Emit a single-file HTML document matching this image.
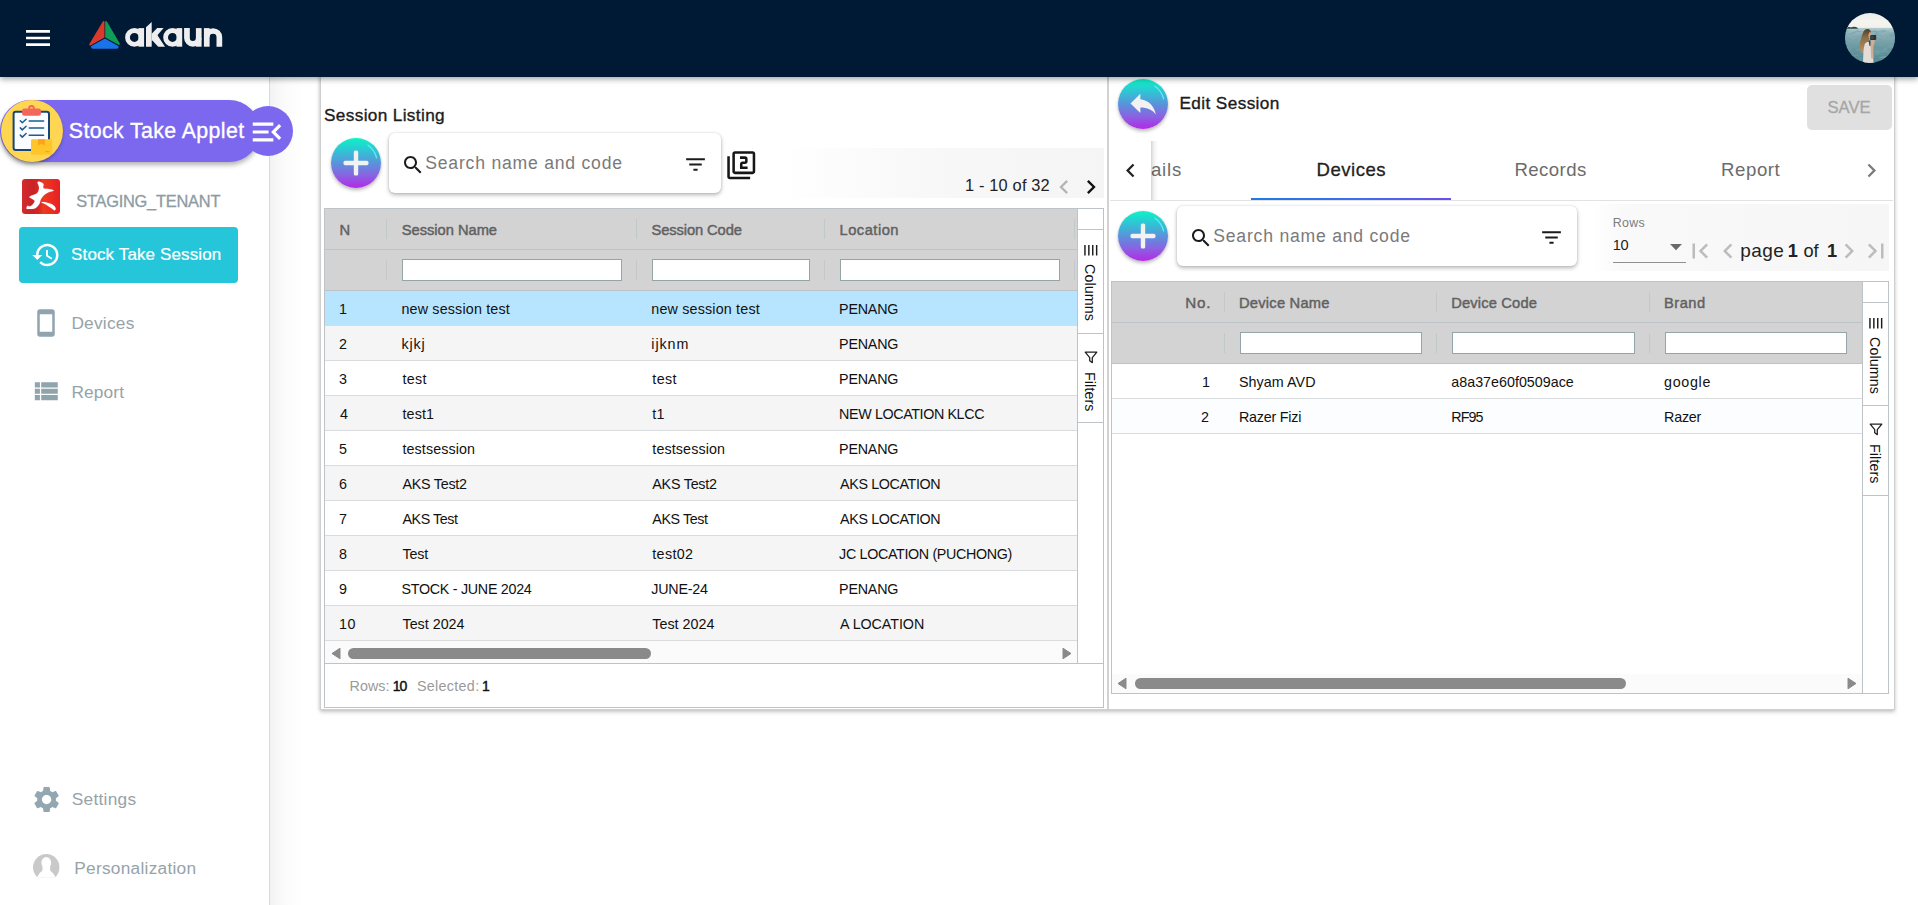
<!DOCTYPE html>
<html><head><meta charset="utf-8"><title>Stock Take Applet</title>
<style>
html,body{margin:0;padding:0;width:1918px;height:905px;overflow:hidden;background:#fff;font-family:"Liberation Sans",sans-serif}
.a{position:absolute;box-sizing:content-box}
.t{position:absolute;white-space:nowrap;line-height:1;font-family:"Liberation Sans",sans-serif}
svg{display:block;overflow:visible}
</style></head><body>
<div class="a" style="left:270px;top:77px;width:36px;height:828px;background:linear-gradient(to right,#f3f3f3,#f8f8f8 25%,#fcfcfc 50%,#fff)"></div>
<div class="a" style="left:0px;top:77px;width:269px;height:828px;background:#fff;border-right:1px solid #dadada"></div>
<div class="a" style="left:320px;top:70px;width:1573px;height:638px;background:#fff;border:1px solid #cfcfcf;box-shadow:0 2px 4px rgba(0,0,0,.22), -1px 0 3px rgba(0,0,0,.08)"></div>
<div class="a" style="left:1107px;top:77px;width:2px;height:632px;background:#d2d2d2"></div>
<span id="t_sl" class="t" style="left:324.00px;top:107.00px;font-size:17.2px;color:#1c1c1c;font-weight:normal;letter-spacing:0.357px;-webkit-text-stroke:.35px #1c1c1c">Session Listing</span>
<div class="a" style="left:780px;top:148px;width:324px;height:49.5px;background:linear-gradient(to right,#fff,#f8f8f8 45%,#f5f5f5)"></div>
<span id="t_pg1" class="t" style="left:965.00px;top:177.00px;font-size:16.4px;color:#222;font-weight:normal;letter-spacing:0.164px;">1 - 10 of 32</span>
<svg class="a" style="left:1049.5px;top:173.3px;" width="28" height="28" viewBox="0 0 24 24"><path fill="#b5b5b5" d="M15.41 7.41L14 6l-6 6 6 6 1.41-1.41L10.83 12z"/></svg>
<svg class="a" style="left:1076.6px;top:173.3px;" width="28" height="28" viewBox="0 0 24 24"><path fill="#111" d="M10 6L8.59 7.41 13.17 12l-4.58 4.59L10 18l6-6z"/></svg>
<div class="a" style="left:331px;top:138px;width:50px;height:50px;border-radius:50%;background:linear-gradient(to bottom,#0bf3c8 0%,#2fc5d4 25%,#5d8fdc 52%,#8a62e2 75%,#b22ae6 100%);box-shadow:0 2.5px 3.5px rgba(0,0,0,.24),0 0 2px rgba(0,0,0,.12)"></div>
<svg class="a" style="left:331px;top:138px" width="50" height="50" viewBox="0 0 50 50"><path d="M37 7.2 A21.5 21.5 0 0 1 45.6 19.8" fill="none" stroke="#6ff3f0" stroke-width="1.3" stroke-linecap="round" opacity=".85"/>
<rect x="12.5" y="22.8" width="25" height="4.4" rx="1.6" fill="#f2f2f2"/><rect x="22.8" y="12.5" width="4.4" height="25" rx="1.6" fill="#f2f2f2"/>
</svg>
<div class="a" style="left:389px;top:133px;width:332px;height:60px;background:#fff;border-radius:6px;box-shadow:0 2px 4px rgba(0,0,0,.28),0 0 2px rgba(0,0,0,.14)"></div>
<svg class="a" style="left:401px;top:153px;" width="24" height="24" viewBox="0 0 24 24"><path fill="#1b1b1b" d="M15.5 14h-.79l-.28-.27C15.41 12.59 16 11.11 16 9.5 16 5.91 13.09 3 9.5 3S3 5.91 3 9.5 5.91 16 9.5 16c1.61 0 3.09-.59 4.23-1.57l.27.28v.79l5 4.99L20.49 19l-4.99-5zm-6 0C7.01 14 5 11.99 5 9.5S7.01 5 9.5 5 14 7.01 14 9.5 11.99 14 9.5 14z"/></svg>
<span id="t_ph1" class="t" style="left:425.30px;top:155.00px;font-size:17.6px;color:#7a7a7a;font-weight:normal;letter-spacing:0.779px;">Search name and code</span>
<svg class="a" style="left:683.2px;top:152px;" width="25" height="25" viewBox="0 0 24 24"><path fill="#1b1b1b" d="M10 18h4v-2h-4v2zM3 6v2h18V6H3zm3 7h12v-2H6v2z"/></svg>
<svg class="a" style="left:725.6px;top:149.7px;" width="30.5" height="30.5" viewBox="0 0 24 24"><path fill="#161616" d="M3 5H1v16c0 1.1.9 2 2 2h16v-2H3V5zm18-4H7c-1.1 0-2 .9-2 2v14c0 1.1.9 2 2 2h14c1.1 0 2-.9 2-2V3c0-1.1-.9-2-2-2zm0 16H7V3h14v14zm-4-4h-4v-2h2c1.1 0 2-.89 2-2V7c0-1.11-.9-2-2-2h-4v2h4v2h-2c-1.1 0-2 .89-2 2v4h6v-2z"/></svg>
<div class="a" style="left:324px;top:208px;width:778px;height:498px;background:#fff;border:1px solid #bdc3c7"></div>
<div class="a" style="left:325px;top:209px;width:752px;height:82px;background:#d3d3d3"></div>
<div class="a" style="left:325px;top:249px;width:752px;height:1px;background:#bdc3c7"></div>
<div class="a" style="left:325px;top:290px;width:752px;height:1px;background:#bdc3c7"></div>
<div class="a" style="left:386px;top:219px;width:1px;height:20px;background:#c3c8cb"></div>
<div class="a" style="left:386px;top:260px;width:1px;height:20px;background:#c3c8cb"></div>
<div class="a" style="left:636px;top:219px;width:1px;height:20px;background:#c3c8cb"></div>
<div class="a" style="left:636px;top:260px;width:1px;height:20px;background:#c3c8cb"></div>
<div class="a" style="left:824px;top:219px;width:1px;height:20px;background:#c3c8cb"></div>
<div class="a" style="left:824px;top:260px;width:1px;height:20px;background:#c3c8cb"></div>
<div class="a" style="left:1074px;top:219px;width:1px;height:20px;background:#c3c8cb"></div>
<div class="a" style="left:1074px;top:260px;width:1px;height:20px;background:#c3c8cb"></div>
<span id="t_h_n" class="t" style="left:339.50px;top:223.00px;font-size:14.7px;color:#616161;font-weight:normal;letter-spacing:0.000px;-webkit-text-stroke:.45px #616161">N</span>
<span id="t_h_sn" class="t" style="left:401.80px;top:223.00px;font-size:14.7px;color:#616161;font-weight:normal;letter-spacing:-0.027px;-webkit-text-stroke:.45px #616161">Session Name</span>
<span id="t_h_sc" class="t" style="left:651.50px;top:223.00px;font-size:14.7px;color:#616161;font-weight:normal;letter-spacing:-0.091px;-webkit-text-stroke:.45px #616161">Session Code</span>
<span id="t_h_lo" class="t" style="left:839.50px;top:223.00px;font-size:14.7px;color:#616161;font-weight:normal;letter-spacing:0.500px;-webkit-text-stroke:.45px #616161">Location</span>
<div class="a" style="left:402px;top:259px;width:218px;height:20px;background:#fff;border:1px solid #95a5a6"></div>
<div class="a" style="left:652px;top:259px;width:156px;height:20px;background:#fff;border:1px solid #95a5a6"></div>
<div class="a" style="left:840px;top:259px;width:218px;height:20px;background:#fff;border:1px solid #95a5a6"></div>
<div class="a" style="left:325px;top:291px;width:752px;height:34px;background:#b7e4ff;border-bottom:1px solid #d9dcde"></div>
<span id="t_l0n" class="t" style="left:339.00px;top:302.00px;font-size:14.3px;color:#111;font-weight:normal;letter-spacing:0.000px;">1</span>
<span id="t_l0a" class="t" style="left:401.50px;top:302.00px;font-size:14.3px;color:#111;font-weight:normal;letter-spacing:0.167px;">new session test</span>
<span id="t_l0b" class="t" style="left:651.30px;top:302.00px;font-size:14.3px;color:#111;font-weight:normal;letter-spacing:0.180px;">new session test</span>
<span id="t_l0c" class="t" style="left:839.10px;top:302.00px;font-size:14.3px;color:#111;font-weight:normal;letter-spacing:-0.220px;">PENANG</span>
<div class="a" style="left:325px;top:326px;width:752px;height:34px;background:#f5f5f5;border-bottom:1px solid #d9dcde"></div>
<span id="t_l1n" class="t" style="left:339.00px;top:337.00px;font-size:14.3px;color:#111;font-weight:normal;letter-spacing:0.000px;">2</span>
<span id="t_l1a" class="t" style="left:401.50px;top:337.00px;font-size:14.3px;color:#111;font-weight:normal;letter-spacing:0.833px;">kjkj</span>
<span id="t_l1b" class="t" style="left:651.30px;top:337.00px;font-size:14.3px;color:#111;font-weight:normal;letter-spacing:0.925px;">ijknm</span>
<span id="t_l1c" class="t" style="left:839.10px;top:337.00px;font-size:14.3px;color:#111;font-weight:normal;letter-spacing:-0.220px;">PENANG</span>
<div class="a" style="left:325px;top:361px;width:752px;height:34px;background:#fff;border-bottom:1px solid #d9dcde"></div>
<span id="t_l2n" class="t" style="left:339.00px;top:372.00px;font-size:14.3px;color:#111;font-weight:normal;letter-spacing:0.000px;">3</span>
<span id="t_l2a" class="t" style="left:402.50px;top:372.00px;font-size:14.3px;color:#111;font-weight:normal;letter-spacing:0.333px;">test</span>
<span id="t_l2b" class="t" style="left:652.30px;top:372.00px;font-size:14.3px;color:#111;font-weight:normal;letter-spacing:0.400px;">test</span>
<span id="t_l2c" class="t" style="left:839.10px;top:372.00px;font-size:14.3px;color:#111;font-weight:normal;letter-spacing:-0.220px;">PENANG</span>
<div class="a" style="left:325px;top:396px;width:752px;height:34px;background:#f5f5f5;border-bottom:1px solid #d9dcde"></div>
<span id="t_l3n" class="t" style="left:340.00px;top:407.00px;font-size:14.3px;color:#111;font-weight:normal;letter-spacing:0.000px;">4</span>
<span id="t_l3a" class="t" style="left:402.50px;top:407.00px;font-size:14.3px;color:#111;font-weight:normal;letter-spacing:0.125px;">test1</span>
<span id="t_l3b" class="t" style="left:652.30px;top:407.00px;font-size:14.3px;color:#111;font-weight:normal;letter-spacing:0.200px;">t1</span>
<span id="t_l3c" class="t" style="left:839.10px;top:407.00px;font-size:14.3px;color:#111;font-weight:normal;letter-spacing:-0.381px;">NEW LOCATION KLCC</span>
<div class="a" style="left:325px;top:431px;width:752px;height:34px;background:#fff;border-bottom:1px solid #d9dcde"></div>
<span id="t_l4n" class="t" style="left:339.00px;top:442.00px;font-size:14.3px;color:#111;font-weight:normal;letter-spacing:0.000px;">5</span>
<span id="t_l4a" class="t" style="left:402.50px;top:442.00px;font-size:14.3px;color:#111;font-weight:normal;letter-spacing:0.100px;">testsession</span>
<span id="t_l4b" class="t" style="left:652.30px;top:442.00px;font-size:14.3px;color:#111;font-weight:normal;letter-spacing:0.120px;">testsession</span>
<span id="t_l4c" class="t" style="left:839.10px;top:442.00px;font-size:14.3px;color:#111;font-weight:normal;letter-spacing:-0.220px;">PENANG</span>
<div class="a" style="left:325px;top:466px;width:752px;height:34px;background:#f5f5f5;border-bottom:1px solid #d9dcde"></div>
<span id="t_l5n" class="t" style="left:339.00px;top:477.00px;font-size:14.3px;color:#111;font-weight:normal;letter-spacing:0.000px;">6</span>
<span id="t_l5a" class="t" style="left:402.50px;top:477.00px;font-size:14.3px;color:#111;font-weight:normal;letter-spacing:-0.250px;">AKS Test2</span>
<span id="t_l5b" class="t" style="left:652.30px;top:477.00px;font-size:14.3px;color:#111;font-weight:normal;letter-spacing:-0.225px;">AKS Test2</span>
<span id="t_l5c" class="t" style="left:840.10px;top:477.00px;font-size:14.3px;color:#111;font-weight:normal;letter-spacing:-0.373px;">AKS LOCATION</span>
<div class="a" style="left:325px;top:501px;width:752px;height:34px;background:#fff;border-bottom:1px solid #d9dcde"></div>
<span id="t_l6n" class="t" style="left:339.00px;top:512.00px;font-size:14.3px;color:#111;font-weight:normal;letter-spacing:0.000px;">7</span>
<span id="t_l6a" class="t" style="left:402.50px;top:512.00px;font-size:14.3px;color:#111;font-weight:normal;letter-spacing:-0.429px;">AKS Test</span>
<span id="t_l6b" class="t" style="left:652.30px;top:512.00px;font-size:14.3px;color:#111;font-weight:normal;letter-spacing:-0.400px;">AKS Test</span>
<span id="t_l6c" class="t" style="left:840.10px;top:512.00px;font-size:14.3px;color:#111;font-weight:normal;letter-spacing:-0.373px;">AKS LOCATION</span>
<div class="a" style="left:325px;top:536px;width:752px;height:34px;background:#f5f5f5;border-bottom:1px solid #d9dcde"></div>
<span id="t_l7n" class="t" style="left:339.00px;top:547.00px;font-size:14.3px;color:#111;font-weight:normal;letter-spacing:0.000px;">8</span>
<span id="t_l7a" class="t" style="left:402.50px;top:547.00px;font-size:14.3px;color:#111;font-weight:normal;letter-spacing:-0.167px;">Test</span>
<span id="t_l7b" class="t" style="left:652.30px;top:547.00px;font-size:14.3px;color:#111;font-weight:normal;letter-spacing:0.340px;">test02</span>
<span id="t_l7c" class="t" style="left:839.10px;top:547.00px;font-size:14.3px;color:#111;font-weight:normal;letter-spacing:-0.340px;">JC LOCATION (PUCHONG)</span>
<div class="a" style="left:325px;top:571px;width:752px;height:34px;background:#fff;border-bottom:1px solid #d9dcde"></div>
<span id="t_l8n" class="t" style="left:339.00px;top:582.00px;font-size:14.3px;color:#111;font-weight:normal;letter-spacing:0.000px;">9</span>
<span id="t_l8a" class="t" style="left:401.50px;top:582.00px;font-size:14.3px;color:#111;font-weight:normal;letter-spacing:-0.281px;">STOCK - JUNE 2024</span>
<span id="t_l8b" class="t" style="left:651.30px;top:582.00px;font-size:14.3px;color:#111;font-weight:normal;letter-spacing:-0.217px;">JUNE-24</span>
<span id="t_l8c" class="t" style="left:839.10px;top:582.00px;font-size:14.3px;color:#111;font-weight:normal;letter-spacing:-0.220px;">PENANG</span>
<div class="a" style="left:325px;top:606px;width:752px;height:34px;background:#f5f5f5;border-bottom:1px solid #d9dcde"></div>
<span id="t_l9n" class="t" style="left:339.00px;top:617.00px;font-size:14.3px;color:#111;font-weight:normal;letter-spacing:0.500px;">10</span>
<span id="t_l9a" class="t" style="left:402.50px;top:617.00px;font-size:14.3px;color:#111;font-weight:normal;letter-spacing:0.000px;">Test 2024</span>
<span id="t_l9b" class="t" style="left:652.30px;top:617.00px;font-size:14.3px;color:#111;font-weight:normal;letter-spacing:0.025px;">Test 2024</span>
<span id="t_l9c" class="t" style="left:840.10px;top:617.00px;font-size:14.3px;color:#111;font-weight:normal;letter-spacing:-0.067px;">A LOCATION</span>
<div class="a" style="left:1077px;top:209px;width:1px;height:455px;background:#bdc3c7"></div>
<div class="a" style="left:325px;top:641px;width:752px;height:22px;background:#fbfbfb"></div>
<svg class="a" style="left:330.5px;top:647px" width="10" height="13" viewBox="0 0 10 13"><path d="M9 1.2 L9 11.8 L1 6.5 Z" fill="#8a8a8a" stroke="#8a8a8a" stroke-width="1" stroke-linejoin="round"/></svg>
<svg class="a" style="left:1061.5px;top:647px" width="10" height="13" viewBox="0 0 10 13"><path d="M1 1.2 L1 11.8 L9 6.5 Z" fill="#8a8a8a" stroke="#8a8a8a" stroke-width="1" stroke-linejoin="round"/></svg>
<div class="a" style="left:348px;top:648px;width:303px;height:11px;background:#8a8a8a;border-radius:5.5px"></div>
<div class="a" style="left:325px;top:663px;width:778px;height:1px;background:#bdc3c7"></div>
<span id="t_st1" class="t" style="left:349.50px;top:679.00px;font-size:14.3px;color:#9a9a9a;font-weight:normal;letter-spacing:0.075px;">Rows:</span>
<span id="t_st2" class="t" style="left:392.80px;top:679.00px;font-size:14px;color:#111;font-weight:normal;letter-spacing:-1.200px;-webkit-text-stroke:.45px #111">10</span>
<span id="t_st3" class="t" style="left:417.00px;top:679.00px;font-size:14.3px;color:#9a9a9a;font-weight:normal;letter-spacing:0.312px;">Selected:</span>
<span id="t_st4" class="t" style="left:482.00px;top:679.00px;font-size:14px;color:#111;font-weight:normal;letter-spacing:0.000px;-webkit-text-stroke:.45px #111">1</span>
<div class="a" style="left:1077px;top:209px;width:1px;height:214px;background:#bdc3c7"></div>
<div class="a" style="left:1078px;top:229px;width:25px;height:1px;background:#bdc3c7"></div>
<div class="a" style="left:1078px;top:333px;width:25px;height:1px;background:#bdc3c7"></div>
<div class="a" style="left:1078px;top:422px;width:25px;height:1px;background:#bdc3c7"></div>
<svg class="a" style="left:1083.8px;top:244.5px" width="14" height="10.6" viewBox="0 0 14 10.6"><path d="M.95 0V10.600M4.850 0V10.600M8.750 0V10.600M12.650 0V10.600" stroke="#1c1c1c" stroke-width="1.450" fill="none"/></svg>
<span class="a" style="left:1082.3px;top:263.5px;writing-mode:vertical-rl;font-size:14.3px;line-height:16px;color:#111;letter-spacing:.1px;white-space:nowrap">Columns</span>
<svg class="a" style="left:1083.5px;top:350.5px" width="14" height="13" viewBox="0 0 14 13"><path d="M1.2 1.2 H12.8 L8.3 6.6 V11.6 L5.7 9.8 V6.6 Z" fill="none" stroke="#222" stroke-width="1.3" stroke-linejoin="round"/></svg>
<span class="a" style="left:1082.3px;top:371.5px;writing-mode:vertical-rl;font-size:14.3px;line-height:16px;color:#111;letter-spacing:.1px;white-space:nowrap">Filters</span>
<div class="a" style="left:1118px;top:79px;width:50px;height:50px;border-radius:50%;background:linear-gradient(to bottom,#0bf3c8 0%,#2fc5d4 25%,#5d8fdc 52%,#8a62e2 75%,#b22ae6 100%);box-shadow:0 2.5px 3.5px rgba(0,0,0,.24),0 0 2px rgba(0,0,0,.12)"></div>
<svg class="a" style="left:1118px;top:79px" width="50" height="50" viewBox="0 0 50 50"><path d="M37 7.2 A21.5 21.5 0 0 1 45.6 19.8" fill="none" stroke="#6ff3f0" stroke-width="1.3" stroke-linecap="round" opacity=".85"/>
<g transform="translate(8.3,8.0) scale(1.405,1.37)"><path fill="#f2f2f2" d="M10 9V5l-7 7 7 7v-4.1c5 0 8.5 1.6 11 5.1-1-5-4-10-11-11z"/></g>
</svg>
<span id="t_es" class="t" style="left:1179.50px;top:95.00px;font-size:17.2px;color:#1c1c1c;font-weight:normal;letter-spacing:0.391px;-webkit-text-stroke:.35px #1c1c1c">Edit Session</span>
<div class="a" style="left:1807px;top:85px;width:85px;height:44.5px;background:#e0e0e0;border-radius:5px"></div>
<span id="t_save" class="t" style="left:1827.50px;top:100.00px;font-size:16.6px;color:#a6a6a6;font-weight:normal;letter-spacing:0.000px;-webkit-text-stroke:.3px #a6a6a6">SAVE</span>
<div class="a" style="left:1110px;top:200px;width:783px;height:1px;background:#e2e2e2"></div>
<span id="t_tab0" class="t" style="left:1151.00px;top:161.00px;font-size:18.6px;color:#6b6b6b;font-weight:normal;letter-spacing:0.767px;">ails</span>
<span id="t_tab1" class="t" style="left:1316.50px;top:161.00px;font-size:18.6px;color:#222;font-weight:normal;letter-spacing:0.500px;-webkit-text-stroke:.3px #222">Devices</span>
<span id="t_tab2" class="t" style="left:1514.50px;top:161.00px;font-size:18.6px;color:#6b6b6b;font-weight:normal;letter-spacing:0.417px;">Records</span>
<span id="t_tab3" class="t" style="left:1721.10px;top:161.00px;font-size:18.6px;color:#6b6b6b;font-weight:normal;letter-spacing:0.560px;">Report</span>
<div class="a" style="left:1251px;top:198px;width:200px;height:2px;background:linear-gradient(to right,#1f7ae0,#3d6df0 55%,#6a4fe8)"></div>
<div class="a" style="left:1110px;top:141px;width:41px;height:59px;background:#fff"></div>
<div class="a" style="left:1151px;top:141px;width:7px;height:59px;background:linear-gradient(to right,rgba(0,0,0,.17),rgba(0,0,0,.06) 40%,rgba(0,0,0,0))"></div>
<svg class="a" style="left:1116.7px;top:156.9px;" width="27" height="27" viewBox="0 0 24 24"><path fill="#222" d="M15.41 7.41L14 6l-6 6 6 6 1.41-1.41L10.83 12z"/></svg>
<svg class="a" style="left:1858.3px;top:156.9px;" width="27" height="27" viewBox="0 0 24 24"><path fill="#7a7a7a" d="M10 6L8.59 7.41 13.17 12l-4.58 4.59L10 18l6-6z"/></svg>
<div class="a" style="left:1118px;top:211px;width:50px;height:50px;border-radius:50%;background:linear-gradient(to bottom,#0bf3c8 0%,#2fc5d4 25%,#5d8fdc 52%,#8a62e2 75%,#b22ae6 100%);box-shadow:0 2.5px 3.5px rgba(0,0,0,.24),0 0 2px rgba(0,0,0,.12)"></div>
<svg class="a" style="left:1118px;top:211px" width="50" height="50" viewBox="0 0 50 50"><path d="M37 7.2 A21.5 21.5 0 0 1 45.6 19.8" fill="none" stroke="#6ff3f0" stroke-width="1.3" stroke-linecap="round" opacity=".85"/>
<rect x="12.5" y="22.8" width="25" height="4.4" rx="1.6" fill="#f2f2f2"/><rect x="22.8" y="12.5" width="4.4" height="25" rx="1.6" fill="#f2f2f2"/>
</svg>
<div class="a" style="left:1177px;top:206px;width:400px;height:60px;background:#fff;border-radius:6px;box-shadow:0 2px 4px rgba(0,0,0,.28),0 0 2px rgba(0,0,0,.14)"></div>
<svg class="a" style="left:1189px;top:226px;" width="24" height="24" viewBox="0 0 24 24"><path fill="#1b1b1b" d="M15.5 14h-.79l-.28-.27C15.41 12.59 16 11.11 16 9.5 16 5.91 13.09 3 9.5 3S3 5.91 3 9.5 5.91 16 9.5 16c1.61 0 3.09-.59 4.23-1.57l.27.28v.79l5 4.99L20.49 19l-4.99-5zm-6 0C7.01 14 5 11.99 5 9.5S7.01 5 9.5 5 14 7.01 14 9.5 11.99 14 9.5 14z"/></svg>
<span id="t_ph2" class="t" style="left:1213.30px;top:228.00px;font-size:17.6px;color:#7a7a7a;font-weight:normal;letter-spacing:0.779px;">Search name and code</span>
<svg class="a" style="left:1539.2px;top:225px;" width="25" height="25" viewBox="0 0 24 24"><path fill="#1b1b1b" d="M10 18h4v-2h-4v2zM3 6v2h18V6H3zm3 7h12v-2H6v2z"/></svg>
<div class="a" style="left:1590px;top:204px;width:299px;height:66.5px;background:linear-gradient(to right,#fff,#f9f9f9 12%,#f6f6f6)"></div>
<span id="t_rows" class="t" style="left:1612.70px;top:217.00px;font-size:12.4px;color:#7d7d7d;font-weight:normal;letter-spacing:0.367px;">Rows</span>
<span id="t_ten" class="t" style="left:1612.70px;top:238.00px;font-size:14.6px;color:#222;font-weight:normal;letter-spacing:-0.400px;">10</span>
<svg class="a" style="left:1669.5px;top:243.6px" width="12" height="6.2" viewBox="0 0 12 6.2"><path d="M0 0H12L6 6.2Z" fill="#6a6a6a"/></svg>
<div class="a" style="left:1613px;top:262px;width:73px;height:1px;background:#8f8f8f"></div>
<svg class="a" style="left:1685.2px;top:235.7px;" width="30" height="30" viewBox="0 0 24 24"><path fill="#bcbcbc" d="M18.41 16.59L13.82 12l4.59-4.59L17 6l-6 6 6 6zM6 6h2v12H6z"/></svg>
<svg class="a" style="left:1713px;top:235.7px;" width="30" height="30" viewBox="0 0 24 24"><path fill="#bcbcbc" d="M15.41 7.41L14 6l-6 6 6 6 1.41-1.41L10.83 12z"/></svg>
<span id="t_pgp" class="t" style="left:1740.30px;top:241.00px;font-size:19px;color:#222;font-weight:normal;letter-spacing:0.400px;">page</span>
<span id="t_pg1b" class="t" style="left:1787.70px;top:242.00px;font-size:18.2px;color:#222;font-weight:bold;letter-spacing:0.000px;">1</span>
<span id="t_pgo" class="t" style="left:1803.50px;top:242.00px;font-size:18.2px;color:#222;font-weight:normal;letter-spacing:-0.200px;">of</span>
<span id="t_pg1c" class="t" style="left:1827.10px;top:242.00px;font-size:18.2px;color:#222;font-weight:bold;letter-spacing:0.000px;">1</span>
<svg class="a" style="left:1833.9px;top:235.7px;" width="30" height="30" viewBox="0 0 24 24"><path fill="#bcbcbc" d="M10 6L8.59 7.41 13.17 12l-4.58 4.59L10 18l6-6z"/></svg>
<svg class="a" style="left:1861.2px;top:235.7px;" width="30" height="30" viewBox="0 0 24 24"><path fill="#bcbcbc" d="M5.59 7.41L10.18 12l-4.59 4.59L7 18l6-6-6-6zM16 6h2v12h-2z"/></svg>
<div class="a" style="left:1111px;top:281px;width:776px;height:411px;background:#fff;border:1px solid #bdc3c7"></div>
<div class="a" style="left:1112px;top:282px;width:750px;height:82px;background:#d3d3d3"></div>
<div class="a" style="left:1112px;top:322px;width:750px;height:1px;background:#bdc3c7"></div>
<div class="a" style="left:1112px;top:363px;width:750px;height:1px;background:#bdc3c7"></div>
<div class="a" style="left:1224px;top:292px;width:1px;height:20px;background:#c3c8cb"></div>
<div class="a" style="left:1224px;top:333px;width:1px;height:20px;background:#c3c8cb"></div>
<div class="a" style="left:1436px;top:292px;width:1px;height:20px;background:#c3c8cb"></div>
<div class="a" style="left:1436px;top:333px;width:1px;height:20px;background:#c3c8cb"></div>
<div class="a" style="left:1649px;top:292px;width:1px;height:20px;background:#c3c8cb"></div>
<div class="a" style="left:1649px;top:333px;width:1px;height:20px;background:#c3c8cb"></div>
<span id="t_h_no" class="t" style="left:1185.30px;top:295.00px;font-size:15.2px;color:#616161;font-weight:normal;letter-spacing:0.750px;-webkit-text-stroke:.45px #616161">No.</span>
<span id="t_h_dn" class="t" style="left:1239.00px;top:296.00px;font-size:14.7px;color:#616161;font-weight:normal;letter-spacing:0.230px;-webkit-text-stroke:.45px #616161">Device Name</span>
<span id="t_h_dc" class="t" style="left:1451.30px;top:296.00px;font-size:14.7px;color:#616161;font-weight:normal;letter-spacing:0.150px;-webkit-text-stroke:.45px #616161">Device Code</span>
<span id="t_h_br" class="t" style="left:1664.10px;top:296.00px;font-size:14.7px;color:#616161;font-weight:normal;letter-spacing:0.475px;-webkit-text-stroke:.45px #616161">Brand</span>
<div class="a" style="left:1240px;top:332px;width:180px;height:20px;background:#fff;border:1px solid #95a5a6"></div>
<div class="a" style="left:1452px;top:332px;width:181px;height:20px;background:#fff;border:1px solid #95a5a6"></div>
<div class="a" style="left:1665px;top:332px;width:180px;height:20px;background:#fff;border:1px solid #95a5a6"></div>
<div class="a" style="left:1112px;top:364px;width:750px;height:34px;background:#fff;border-bottom:1px solid #d9dcde"></div>
<div class="a" style="left:1112px;top:399px;width:750px;height:34px;background:#fcfdfe;border-bottom:1px solid #d9dcde"></div>
<span id="t_r0n" class="t" style="left:1202.00px;top:375.00px;font-size:14.3px;color:#111;font-weight:normal;letter-spacing:0.000px;">1</span>
<span id="t_r0a" class="t" style="left:1239.00px;top:375.00px;font-size:14.3px;color:#111;font-weight:normal;letter-spacing:0.062px;">Shyam AVD</span>
<span id="t_r0b" class="t" style="left:1451.30px;top:375.00px;font-size:14.3px;color:#111;font-weight:normal;letter-spacing:0.000px;">a8a37e60f0509ace</span>
<span id="t_r0c" class="t" style="left:1664.10px;top:375.00px;font-size:14.3px;color:#111;font-weight:normal;letter-spacing:0.680px;">google</span>
<span id="t_r1n" class="t" style="left:1201.00px;top:410.00px;font-size:14.3px;color:#111;font-weight:normal;letter-spacing:0.000px;">2</span>
<span id="t_r1a" class="t" style="left:1239.00px;top:410.00px;font-size:14.3px;color:#111;font-weight:normal;letter-spacing:-0.222px;">Razer Fizi</span>
<span id="t_r1b" class="t" style="left:1451.30px;top:410.00px;font-size:14.3px;color:#111;font-weight:normal;letter-spacing:-0.933px;">RF95</span>
<span id="t_r1c" class="t" style="left:1664.10px;top:410.00px;font-size:14.3px;color:#111;font-weight:normal;letter-spacing:-0.225px;">Razer</span>
<div class="a" style="left:1112px;top:674px;width:750px;height:19px;background:#fbfbfb"></div>
<svg class="a" style="left:1117px;top:677px" width="10" height="13" viewBox="0 0 10 13"><path d="M9 1.2 L9 11.8 L1 6.5 Z" fill="#8a8a8a" stroke="#8a8a8a" stroke-width="1" stroke-linejoin="round"/></svg>
<svg class="a" style="left:1847px;top:677px" width="10" height="13" viewBox="0 0 10 13"><path d="M1 1.2 L1 11.8 L9 6.5 Z" fill="#8a8a8a" stroke="#8a8a8a" stroke-width="1" stroke-linejoin="round"/></svg>
<div class="a" style="left:1134.5px;top:678px;width:491.5px;height:11px;background:#8a8a8a;border-radius:5.5px"></div>
<div class="a" style="left:1862px;top:282px;width:1px;height:214px;background:#bdc3c7"></div>
<div class="a" style="left:1863px;top:302px;width:25px;height:1px;background:#bdc3c7"></div>
<div class="a" style="left:1863px;top:405px;width:25px;height:1px;background:#bdc3c7"></div>
<div class="a" style="left:1863px;top:495px;width:25px;height:1px;background:#bdc3c7"></div>
<svg class="a" style="left:1868.8px;top:317.5px" width="14" height="10.6" viewBox="0 0 14 10.6"><path d="M.95 0V10.600M4.850 0V10.600M8.750 0V10.600M12.650 0V10.600" stroke="#1c1c1c" stroke-width="1.450" fill="none"/></svg>
<span class="a" style="left:1867.3px;top:336.5px;writing-mode:vertical-rl;font-size:14.3px;line-height:16px;color:#111;letter-spacing:.1px;white-space:nowrap">Columns</span>
<svg class="a" style="left:1868.5px;top:422.5px" width="14" height="13" viewBox="0 0 14 13"><path d="M1.2 1.2 H12.8 L8.3 6.6 V11.6 L5.7 9.8 V6.6 Z" fill="none" stroke="#222" stroke-width="1.3" stroke-linejoin="round"/></svg>
<span class="a" style="left:1867.3px;top:443.5px;writing-mode:vertical-rl;font-size:14.3px;line-height:16px;color:#111;letter-spacing:.1px;white-space:nowrap">Filters</span>
<div class="a" style="left:1862px;top:282px;width:1px;height:411px;background:#bdc3c7"></div>
<div class="a" style="left:0px;top:100px;width:260px;height:62px;background:#7b68ee;border-radius:31px;box-shadow:0 3px 5px rgba(0,0,0,.3)"></div>
<div class="a" style="left:242.5px;top:105.7px;width:50px;height:50px;background:#7b68ee;border-radius:50%"></div>
<div class="a" style="left:1px;top:100px;width:62px;height:62px;background:#ffd651;border-radius:50%;box-shadow:0 2px 3px rgba(0,0,0,.25)"></div>
<svg class="a" style="left:0;top:95px" width="70" height="70" viewBox="0 0 70 70">
<rect x="13.6" y="16.8" width="35.4" height="38.2" rx="2.2" fill="#fbfcff" stroke="#17467c" stroke-width="2"/>
<rect x="22" y="13.6" width="19" height="7.2" rx="2.4" fill="#f2665c"/>
<circle cx="31.5" cy="13.4" r="2.4" fill="none" stroke="#f2665c" stroke-width="1.8"/>
<g stroke="#1f5b93" stroke-width="1.5" fill="none" stroke-linecap="round" stroke-linejoin="round">
<path d="M29.2 26H43.6M29.2 33.1H43.6M29.2 40.3H43.6"/>
<path d="M20.3 25.8l2 2 3.8-3.6M20.3 32.9l2 2 3.8-3.6M20.3 40.1l2 2 3.8-3.6"/></g>
<rect x="31" y="44.2" width="21.2" height="15.5" rx="1.3" fill="#ffc629"/>
<path d="M38 44.2h6.9v6.2l-3.45-1.6-3.45 1.6z" fill="#ffa31a"/>
<rect x="45.5" y="56.2" width="3.8" height="1" fill="#f59a1b"/>
</svg>
<span id="t_sta" class="t" style="left:68.80px;top:121.00px;font-size:21.3px;color:#fff;font-weight:normal;letter-spacing:0.400px;-webkit-text-stroke:.35px #fff">Stock Take Applet</span>
<svg class="a" style="left:248.3px;top:112.6px;" width="38" height="38" viewBox="0 0 24 24"><path fill="#fff" d="M3 18h13v-2H3v2zm0-5h10v-2H3v2zm0-7v2h13V6H3zm18 9.59L17.42 12 21 8.41 19.59 7l-5 5 5 5L21 15.59z"/></svg>
<svg class="a" style="left:22px;top:179px" width="38" height="35" viewBox="0 0 38 35">
<defs><linearGradient id="tg" x1="0" x2="1" y1="0" y2="0"><stop offset="0" stop-color="#d02b2f"/><stop offset=".3" stop-color="#cb2226"/><stop offset=".46" stop-color="#d92724"/><stop offset=".56" stop-color="#ea3a22"/><stop offset=".8" stop-color="#ea2c23"/><stop offset="1" stop-color="#e62022"/></linearGradient></defs>
<rect width="38" height="35" rx="3.2" fill="url(#tg)"/>
<g fill="#fff" stroke="#fff" stroke-width=".15" stroke-linejoin="round">
<path d="M15.3 3.3C15.9 2.5 16.600 2.300 17.3 2.400C18.600 2.800 19.700 3.300 20.600 4.100C21.300 4.700 21.800 5.300 21.600 6.200C21.300 7 21 7.600 21.100 8.300C21.300 9.100 21.900 9.600 22.800 9.700C24.200 9.800 25.600 9.800 27 10C28.800 10.300 30.500 10.800 31.900 11.400C31 12 30.100 12.300 29.100 12.600C27.400 13.100 25.800 13.700 24.300 14.500C23 15.200 21.900 16.100 21 17.200C20 18.400 19.200 19.600 18.600 21C18.400 21.600 18.200 22.200 18.100 22.900C17.700 24.300 17.100 25.500 16.300 26.600C15.600 27.600 14.800 28.400 13.800 29C12.700 29.600 11.400 29.900 10.100 29.900H4.800C4.300 29.500 4.300 29 4.500 28.500C4.800 27.700 5.300 27.100 5.900 26.600C6.200 27 6.600 27.300 7 27.500C7.900 27.400 8.800 27.100 9.600 26.500C10.600 25.800 11.400 24.800 12 23.700C12.300 23.100 12.600 22.500 12.700 21.900C12 21.100 11.100 20.500 10.100 20C9 19.400 8 18.800 7 18.100C7.800 17.500 8.700 17 9.600 16.600C11 16.100 12.500 15.700 13.900 15.100C14.900 14.400 15.700 13.500 16.200 12.400C16.800 11.200 17.100 9.900 17 8.600C16.900 7.600 16.700 6.600 16.300 5.700C16 4.900 15.600 4.100 15.300 3.300Z"/>
<path d="M19.100 23.100C20.800 23 22.600 23.100 24.300 23.500C26.300 23.900 28.300 24.400 30 25.300C31.500 26.100 32.700 27.200 33.400 28.600C33.700 29.200 33.800 29.800 33.600 30.500C33.300 31 32.900 31.300 32.400 31.400C31.300 30.600 30.200 29.800 29.100 29C27.500 27.900 25.900 26.800 24.300 25.700C23.100 25 21.800 24.400 20.500 24C20 23.700 19.500 23.400 19.100 23.100Z"/>
</g></svg>
<span id="t_ten_name" class="t" style="left:76.20px;top:193.00px;font-size:16.4px;color:#8d9ba2;font-weight:normal;letter-spacing:-0.231px;-webkit-text-stroke:.3px #8d9ba2">STAGING_TENANT</span>
<div class="a" style="left:19px;top:227px;width:219px;height:56px;background:#26c6da;border-radius:4px"></div>
<svg class="a" style="left:31px;top:240px;" width="30" height="30" viewBox="0 0 24 24"><path fill="#fff" d="M13 3c-4.97 0-9 4.03-9 9H1l3.89 3.89.07.14L9 12H6c0-3.87 3.13-7 7-7s7 3.13 7 7-3.13 7-7 7c-1.93 0-3.68-.79-4.94-2.06l-1.42 1.42C8.27 19.99 10.51 21 13 21c4.97 0 9-4.03 9-9s-4.03-9-9-9zm-1 5v5l4.28 2.54.72-1.21-3.5-2.08V8H12z"/></svg>
<span id="t_sts" class="t" style="left:71.10px;top:246.00px;font-size:17px;color:#fff;font-weight:normal;letter-spacing:0.124px;-webkit-text-stroke:.2px #fff">Stock Take Session</span>
<svg class="a" style="left:31px;top:307.5px;" width="30" height="30" viewBox="0 0 24 24"><path fill="#90a4ae" d="M17 1.01L7 1c-1.1 0-1.99.9-1.99 2v18c0 1.1.89 2 1.99 2h10c1.1 0 2-.9 2-2V3c0-1.1-.9-1.99-2-1.99zM17 19H7V5h10v14z"/></svg>
<span id="t_dev" class="t" style="left:71.40px;top:315.00px;font-size:17.3px;color:#96a3a9;font-weight:normal;letter-spacing:0.250px;">Devices</span>
<svg class="a" style="left:31.2px;top:376.2px;" width="30.6" height="30.6" viewBox="0 0 24 24"><path fill="#90a4ae" d="M3 14h4v-4H3v4zm0 5h4v-4H3v4zM3 9h4V5H3v4zm5 5h13v-4H8v4zm0 5h13v-4H8v4zM8 5v4h13V5H8z"/></svg>
<span id="t_rep" class="t" style="left:71.40px;top:384.00px;font-size:17.3px;color:#96a3a9;font-weight:normal;letter-spacing:0.140px;">Report</span>
<svg class="a" style="left:30.9px;top:784.2px;" width="31.2" height="31.2" viewBox="0 0 24 24"><path fill="#93a7b2" d="M19.14 12.94c.04-.3.06-.61.06-.94 0-.32-.02-.64-.07-.94l2.03-1.58c.18-.14.23-.41.12-.61l-1.92-3.32c-.12-.22-.37-.29-.59-.22l-2.39.96c-.5-.38-1.03-.7-1.62-.94l-.36-2.54c-.04-.24-.24-.41-.48-.41h-3.84c-.24 0-.43.17-.47.41l-.36 2.54c-.59.24-1.13.57-1.62.94l-2.39-.96c-.22-.08-.47 0-.59.22L2.74 8.87c-.12.21-.08.47.12.61l2.03 1.58c-.05.3-.09.63-.09.94s.02.64.07.94l-2.03 1.58c-.18.14-.23.41-.12.61l1.92 3.32c.12.22.37.29.59.22l2.39-.96c.5.38 1.03.7 1.62.94l.36 2.54c.05.24.24.41.48.41h3.84c.24 0 .44-.17.47-.41l.36-2.54c.59-.24 1.13-.56 1.62-.94l2.39.96c.22.08.47 0 .59-.22l1.92-3.32c.12-.22.07-.47-.12-.61l-2.01-1.58zM12 15.6c-1.98 0-3.6-1.62-3.6-3.6s1.62-3.6 3.6-3.6 3.6 1.62 3.6 3.6-1.62 3.6-3.6 3.6z"/></svg>
<span id="t_set" class="t" style="left:71.80px;top:791.00px;font-size:17.3px;color:#96a3a9;font-weight:normal;letter-spacing:0.271px;">Settings</span>
<svg class="a" style="left:32.7px;top:854.3px" width="26.6" height="23.4" viewBox="0 0 26.6 23.4">
<defs><clipPath id="pc"><circle cx="13.3" cy="13.3" r="13.3"/></clipPath></defs>
<g clip-path="url(#pc)"><rect width="26.6" height="23.4" fill="#c9c9c9"/>
<ellipse cx="13.3" cy="8.8" rx="4.9" ry="5.7" fill="#fff"/><rect x="9.5" y="11.5" width="7.6" height="7" fill="#fff"/><path d="M9.5 16.6Q13.300 15.8 17.100 16.600Q20.500 18.800 22.800 23.400H3.800Q6.100 18.800 9.500 16.600Z" fill="#fff"/></g></svg>
<span id="t_per" class="t" style="left:74.30px;top:860.00px;font-size:17.3px;color:#96a3a9;font-weight:normal;letter-spacing:0.257px;">Personalization</span>
<div class="a" style="left:0px;top:0px;width:1918px;height:77px;background:#001935;box-shadow:0 2px 6px rgba(0,0,0,.38)"></div>
<svg class="a" style="left:21.5px;top:22px;" width="32" height="32" viewBox="0 0 24 24"><path fill="#fff" d="M3 18h18v-2H3v2zm0-5h18v-2H3v2zm0-7v2h18V6H3z"/></svg>
<svg class="a" style="left:88px;top:19px" width="34" height="32" viewBox="0 0 34 32">
<g stroke-linejoin="round" stroke-width="1.8">
<path d="M15.6 3 L2 25.6 L15.6 18 Z" fill="#d83b2c" stroke="#d83b2c"/>
<path d="M18.1 3 L31 25 L18.1 18 Z" fill="#0e9d58" stroke="#0e9d58"/>
<path d="M16.9 20.6 L3.8 27.8 L4.6 28.8 L28.9 28.8 L29.8 27.800 Z" fill="#1a73e8" stroke="#1a73e8"/>
</g></svg>
<svg class="a" style="left:120px;top:16px" width="110" height="36" viewBox="120 16 110 36">
<g fill="#eeeeee" stroke="none">
<rect x="138.4" y="28.1" width="5.7" height="18.6"/>
<polygon points="146,27.3 151.7,21.9 151.7,46.7 146,46.7"/>
<polygon points="151.7,33.8 157.2,28.1 163.6,28.1 154.6,38.4 151.7,41"/>
<polygon points="152.6,37.6 157.0,34.6 165.0,46.7 158.2,46.7 151.7,39.8"/>
<rect x="176.5" y="28.1" width="5.7" height="18.6"/>
<rect x="203.9" y="28.1" width="5.7" height="18.6"/>
</g>
<g fill="none" stroke="#eeeeee">
<circle cx="134.4" cy="37.4" r="6.9" stroke-width="4.8"/>
<circle cx="172.5" cy="37.4" r="6.9" stroke-width="4.8"/>
<path d="M186.95 28.1V37.9A5.9 5.9 0 0 0 198.75 37.9" stroke-width="5.7"/>
<path d="M198.75 28.1V46.7" stroke-width="5.7"/>
<path d="M206.75 37.3A6.300 6.300 0 0 1 219.35 37.3V46.7" stroke-width="5.7"/>
</g></svg>
<svg class="a" style="left:1845px;top:13px" width="50" height="50" viewBox="0 0 50 50">
<defs><clipPath id="ac"><circle cx="25" cy="25" r="25"/></clipPath>
<linearGradient id="sea" x1="0" x2="0" y1="0" y2="1"><stop offset="0" stop-color="#b3cbce"/><stop offset=".18" stop-color="#8fb0b6"/><stop offset=".5" stop-color="#6f9aa2"/><stop offset="1" stop-color="#4f838c"/></linearGradient>
<linearGradient id="sky" x1="0" x2="0" y1="0" y2="1"><stop offset="0" stop-color="#e8eeec"/><stop offset=".6" stop-color="#f5f4f0"/><stop offset="1" stop-color="#f3f0ea"/></linearGradient>
<linearGradient id="hair" x1="0" x2="0" y1="0" y2="1"><stop offset="0" stop-color="#4e3d2b"/><stop offset=".35" stop-color="#8a6c45"/><stop offset="1" stop-color="#b8955f"/></linearGradient>
<filter id="wv" x="0" y="0" width="100%" height="100%"><feTurbulence type="fractalNoise" baseFrequency=".14 .5" numOctaves="2" seed="3"/><feColorMatrix type="matrix" values="0 0 0 0 .17  0 0 0 0 .37  0 0 0 0 .42  3.6 0 0 0 -1.5"/></filter>
</defs>
<g clip-path="url(#ac)"><rect width="50" height="15" fill="url(#sky)"/><rect y="14.9" width="50" height="35.100" fill="url(#sea)"/>
<rect y="17" width="50" height="33" filter="url(#wv)" opacity=".75"/>
<path d="M1.500 15.800c.5-1.300 1.600-1.800 2.900-1.700 1.300.3 2.200.3 3.300-.2 1.600-.5 3.200-.2 4.300.7.500.4.900.8 1.100 1.200z" fill="#2d4a44"/>
<path d="M20.300 16.400c1.700-.9 3.700-.6 4.900.8.700 1 .7 2.300.2 3.500l-1.300 4.300c-.4 2-.5 4-.300 6l-2.800 6.400-2.600 2.800c-2.300-1-3.600-3.600-3.700-6.300-.1-3.300.9-6.700 1.800-9.800.8-2.900 1.500-6 3.800-7.700z" fill="url(#hair)"/>
<path d="M24.200 19.500c1.100-.7 2.100-.1 2.200 1.100v4.200l-2.300 1.200-.8-3.500z" fill="#c9a184"/>
<path d="M25.200 23.100c.2-.7.700-1 1.400-1h3.600c.6 0 1 .4 1 1v3c0 .5-.4.900-1 .9h-4.200c-.6 0-.9-.4-.9-.9z" fill="#2a3236"/>
<circle cx="27.300" cy="24.500" r="1.700" fill="#3a454a"/>
<path d="M19.900 30.800c1.300-1.800 3.300-2.400 4.600-1.400 1.300 3 2.100 6.400 2.600 10 .5 3.400 1 7 1.700 10.600h-10.900c.2-3.300.4-6.600.5-10 .1-3.200.5-6.400 1.500-9.200z" fill="#e4dcd8"/>
<path d="M23.600 27.800l1.500-.6.900 5.400-1.500.5z" fill="#3c4a4a"/>
<path d="M26.200 26.900h3.500c.3 1.300.1 2.600-.5 3.800-.6 1.400-.9 2.800-.9 4.300l.3 10.400-2.400.2-.5-9.900c-.1-1.500-.2-3-.1-4.500z" fill="#d3ad90"/>
</g></svg>
</body></html>
